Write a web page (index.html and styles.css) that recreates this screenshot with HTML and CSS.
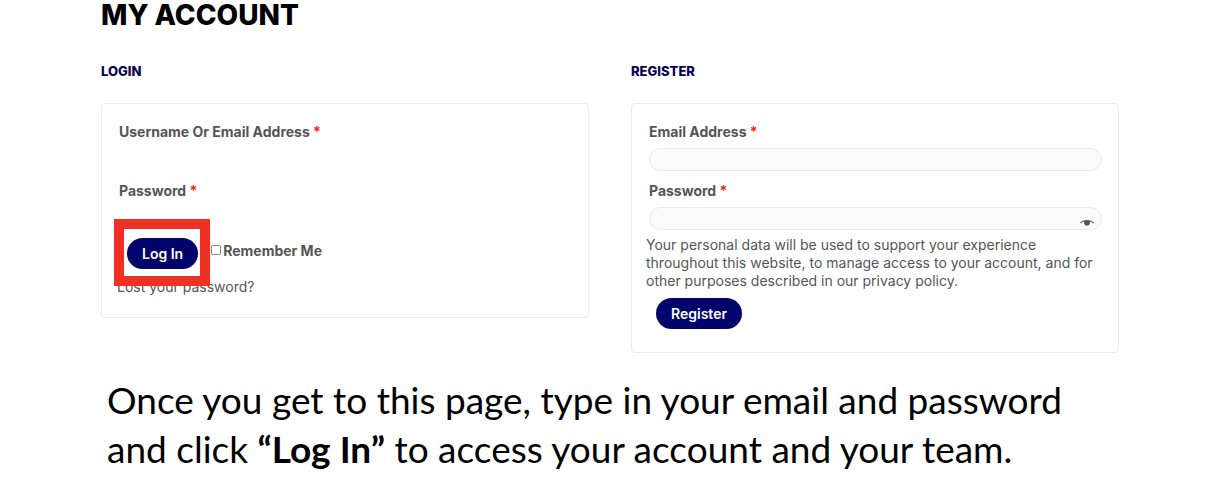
FILE: index.html
```html
<!DOCTYPE html>
<html lang="en">
<head>
<meta charset="utf-8">
<meta name="viewport" content="width=device-width, initial-scale=1">
<title>My Account</title>
<link rel="stylesheet" href="styles.css">
</head>
<body>
<main class="page">
  <h1 class="page-title">MY ACCOUNT</h1>
  <div class="columns">
    <section class="column">
      <h2 class="section-title">LOGIN</h2>
      <form class="card">
        <div class="field">
          <label for="username">Username Or Email Address <span class="required">*</span></label>
          <input class="text-input plain" id="username" type="text">
        </div>
        <div class="field">
          <label for="login-password">Password <span class="required">*</span></label>
          <input class="text-input plain" id="login-password" type="password">
        </div>
        <div class="login-row">
          <span class="highlight"><button class="button" type="button">Log In</button></span>
          <span class="remember"><input class="checkbox" id="remember" type="checkbox"><label for="remember">Remember Me</label></span>
        </div>
        <a class="lost-link" href="#">Lost your password?</a>
      </form>
    </section>
    <section class="column">
      <h2 class="section-title">REGISTER</h2>
      <form class="card">
        <div class="field">
          <label for="email">Email Address <span class="required">*</span></label>
          <input class="text-input" id="email" type="email">
        </div>
        <div class="field">
          <label for="register-password">Password <span class="required">*</span></label>
          <input class="text-input" id="register-password" type="password">
          <button class="reveal" type="button" aria-label="Show password">
            <svg width="14" height="6" viewBox="0 0 14 6"><path d="M0 2.600C2 .8 4.500 0 7 0s5 .8 7 2.600l-.5.9C12.400 2.500 11.200 1.800 9.900 1.400 10.400 3.900 9 5.600 7 5.600S3.600 3.900 4.100 1.400C2.800 1.800 1.600 2.500.5 3.500z" fill="#555"/></svg>
          </button>
        </div>
        <p class="privacy">Your personal data will be used to support your experience throughout this website, to manage access to your account, and for other purposes described in our privacy policy.</p>
        <button class="button register-button" type="button">Register</button>
      </form>
    </section>
  </div>
  <p class="caption">Once you get to this page, type in your email and password<br>and click <strong>“Log In”</strong> to access your account and your team.</p>
</main>
</body>
</html>
```
FILE: styles.css
```css
* { box-sizing: border-box; }

body {
  margin: 0;
  background: #fff;
  color: #555;
  font-family: Inter, "Open Sans", sans-serif;
  font-size: 14px;
}

.page { padding: 0 87px 0 101px; }

.page-title {
  margin: 0;
  color: #000;
  font-size: 28px;
  font-weight: 800;
  line-height: 30px;
}

.columns {
  display: grid;
  grid-template-columns: 1fr 1fr;
  align-items: start;
  gap: 42px;
  padding-top: 31px;
}

.section-title {
  margin: 0 0 22px;
  color: #0a0055;
  font-size: 13px;
  font-weight: 800;
  line-height: 20px;
}

.card {
  padding: 16px 13px 16px 14px;
  border: 1px solid #ececec;
  border-radius: 4px;
}

.field {
  position: relative;
  display: flex;
  flex-direction: column;
  gap: 4px;
  margin: 0 3px 8px;
}

.field label,
.remember label { font-weight: 700; }

.field label { line-height: 24px; }

.required { color: #f3231e; }

.text-input {
  width: 100%;
  height: 23px;
  padding: 0 28px 0 12px;
  border: 1px solid #e9e9e9;
  border-radius: 12px;
  background: #fbfbfb;
  font: inherit;
}

.text-input.plain {
  border-color: transparent;
  background: transparent;
}

.reveal {
  position: absolute;
  right: 8px;
  bottom: 4px;
  display: flex;
  padding: 0;
  border: 0;
  background: none;
}

.login-row {
  display: flex;
  align-items: flex-start;
  gap: 13px;
  padding-left: 11px;
}

.highlight {
  position: relative;
  display: flex;
}

/* Red marker frame drawn over the form around the button. */
.highlight::after {
  content: "";
  position: absolute;
  inset: -19px -12px -17px -13px;
  border: 10px solid #ee3124;
  pointer-events: none;
}

.button {
  height: 31px;
  padding: 0 15px;
  border: 0;
  border-radius: 16px;
  background: #00046b;
  color: #fff;
  font: 600 14px/31px Inter, "Open Sans", sans-serif;
}

.remember {
  display: flex;
  align-items: center;
  gap: 2px;
  height: 24px;
}

.checkbox {
  appearance: none;
  width: 10px;
  height: 10px;
  margin: 0;
  border: 1px solid #888;
  border-radius: 2px;
  background: #fff;
}

.lost-link {
  display: block;
  padding: 9px 1px 5px;
  color: #555;
  line-height: 18px;
  text-decoration: none;
}

.privacy {
  margin: -2px 0 8px;
  line-height: 18px;
}

.register-button {
  display: block;
  margin: 0 0 7px 10px;
}

.caption {
  margin: 22px 0 0 6px;
  color: #000;
  font-family: Lato, sans-serif;
  font-size: 37px;
  line-height: 49px;
}
```
